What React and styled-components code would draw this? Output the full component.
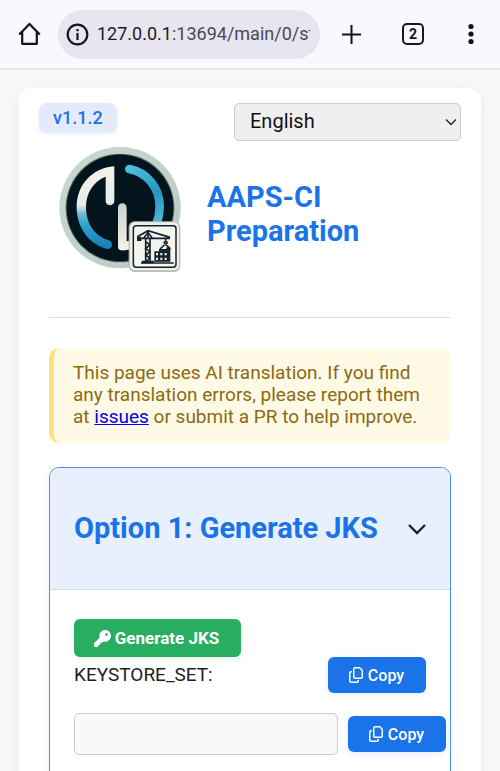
import React from "react";
import styled, { createGlobalStyle } from "styled-components";
import { FaKey, FaRegCopy } from "react-icons/fa6";

const GlobalStyle = createGlobalStyle`
  * { box-sizing: border-box; }
  body {
    margin: 0;
    background: #f8f8f8;
    color: #222;
    font-family: Roboto, "Liberation Sans", sans-serif;
  }
  h1, h2, p { margin: 0; }
  button, input, select { font-family: inherit; }
  svg { display: block; flex-shrink: 0; }
`;

const Screen = styled.div`
  height: 100vh;
  display: flex;
  flex-direction: column;
`;

const BrowserBar = styled.header`
  display: flex;
  align-items: center;
  flex-shrink: 0;
  height: 70px;
  padding: 0 17px 0 18px;
  background: #f9f8ff;
  border-bottom: 2px solid #e6e5eb;
`;

const IconButton = styled.button`
  display: flex;
  align-items: center;
  justify-content: center;
  width: 24px;
  height: 24px;
  padding: 0;
  border: 0;
  background: none;
  color: #121318;
  margin-left: ${(p) => p.$gap || 0}px;
`;

const Address = styled.div`
  display: flex;
  align-items: center;
  gap: 8px;
  flex: 1;
  min-width: 0;
  height: 49px;
  margin-left: 16px;
  padding: 0 10px 0 8px;
  border-radius: 25px;
  background: #e7e5ef;
`;

const Url = styled.span`
  flex: 1;
  overflow: hidden;
  white-space: nowrap;
  font-size: 18px;
  line-height: 26px;
  color: #4a4953;
`;

const Host = styled.span`
  color: #1c1b21;
`;

const Viewport = styled.main`
  flex: 1;
  min-height: 0;
  overflow-y: auto;
  scrollbar-width: none;
  padding: 18px 19px;
`;

const Sheet = styled.div`
  padding: 15px 20px 30px;
  border-radius: 12px;
  background: #fff;
  box-shadow: 0 4px 16px rgba(0, 0, 0, 0.06);
`;

const TopRow = styled.div`
  display: flex;
  align-items: flex-start;
  justify-content: space-between;
`;

const Version = styled.span`
  padding: 0 14px;
  border-radius: 8px;
  background: #e4eafc;
  box-shadow: 0 1px 4px rgba(26, 115, 232, 0.1);
  color: #1a73e8;
  font-size: 18px;
  font-weight: 500;
  line-height: 30px;
`;

const LanguagePicker = styled.div`
  display: grid;
  align-items: center;
  width: 227px;

  > * { grid-area: 1 / 1; }
  > svg { justify-self: end; margin-right: 4px; pointer-events: none; }
`;

const Language = styled.select`
  appearance: none;
  width: 100%;
  height: 38px;
  padding: 0 24px 2px 15px;
  border: 1px solid #ccc;
  border-radius: 5px;
  background-color: #efefef;
  color: #111;
  font-size: 20px;
`;

const Content = styled.div`
  padding: 0 10px;
`;

const Brand = styled.div`
  display: flex;
  align-items: flex-start;
  gap: 26px;
  padding: 6px 10px 45px;
  border-bottom: 1px solid #ddd;
`;

const Title = styled.h1`
  margin-top: 33px;
  color: #1a73e8;
  font-size: 29px;
  font-weight: 700;
  line-height: 34px;
`;

const Notice = styled.p`
  margin-top: 30px;
  padding: 14px 20px 15px 19px;
  border-left: 5px solid #ffe082;
  border-radius: 10px;
  background: #fffae6;
  color: #8a6a10;
  font-size: 19px;
  line-height: 22px;
`;

const IssueLink = styled.a`
  color: #0000ee;
`;

const Panel = styled.section`
  margin-top: 24px;
  border: 1px solid #4a8fee;
  border-radius: 10px;
  overflow: hidden;
  box-shadow: 0 2px 10px rgba(0, 0, 0, 0.05);
`;

const PanelHeader = styled.div`
  display: flex;
  align-items: center;
  justify-content: space-between;
  height: 122px;
  padding: 0 21px 2px 24px;
  border-bottom: 1px solid #d5dbe6;
  background: #e8f0fe;
`;

const PanelTitle = styled.h2`
  color: #1a73e8;
  font-size: 29px;
  font-weight: 700;
  line-height: 34px;
`;

const PanelBody = styled.div`
  padding: 29px 24px 40px;
`;

const ActionButton = styled.button`
  display: inline-flex;
  align-items: center;
  justify-content: center;
  gap: 4px;
  flex-shrink: 0;
  width: ${(p) => (p.$primary ? 98 : 167)}px;
  height: ${(p) => (p.$primary ? 36 : 38)}px;
  padding: 0 2px 0 0;
  border: 0;
  border-radius: 6px;
  background: ${(p) => (p.$primary ? "#1a73e8" : "#27ae60")};
  box-shadow: 0 2px 6px ${(p) => (p.$primary ? "rgba(26, 115, 232, 0.12)" : "rgba(39, 174, 96, 0.14)")};
  color: #fff;
  font-size: ${(p) => (p.$primary ? 16 : 17)}px;
  font-weight: ${(p) => (p.$primary ? 500 : 700)};
`;

const LabelRow = styled.div`
  display: flex;
  align-items: center;
  justify-content: space-between;
`;

const FieldLabel = styled.label`
  font-size: 19px;
  line-height: 24px;
`;

const FieldRow = styled.div`
  display: flex;
  align-items: center;
  gap: 10px;
  margin: 20px -20px 0 0;
`;

const Field = styled.input`
  flex: 1;
  min-width: 0;
  height: 42px;
  padding: 0 10px;
  border: 1px solid #ccc;
  border-radius: 5px;
  background: #f8f9fb;
  font-size: 17px;
`;

const HomeIcon = () => (
  <svg width="24" height="24" viewBox="0 0 24 24" fill="none" stroke="currentColor" strokeWidth="2.2" strokeLinejoin="round">
    <path d="M1.2 12.4 11.5 1.9 21.8 12.4M4.2 9.8v12h14.6v-12" />
  </svg>
);

const InfoIcon = () => (
  <svg width="23" height="23" viewBox="0 0 23 23" fill="none" stroke="#17171d" strokeWidth="2.2">
    <circle cx="11.5" cy="11.5" r="9.8" />
    <path d="M11.5 10v7M11.5 6v2.3" />
  </svg>
);

const PlusIcon = () => (
  <svg width="22" height="22" viewBox="0 0 22 22" stroke="currentColor" strokeWidth="2">
    <path d="M11.5 2v19M2 11.5h19" />
  </svg>
);

const TabCount = styled.span`
  display: flex;
  align-items: center;
  justify-content: center;
  width: 22px;
  height: 22px;
  border: 2px solid #17171d;
  border-radius: 5px;
  font-size: 14px;
  font-weight: 700;
`;

const MoreIcon = () => (
  <svg width="6" height="22" viewBox="0 0 6 22" fill="currentColor">
    <circle cx="3" cy="3.5" r="2.6" />
    <circle cx="3" cy="11" r="2.6" />
    <circle cx="3" cy="18.5" r="2.6" />
  </svg>
);

const SelectArrow = () => (
  <svg width="12" height="8" viewBox="0 0 12 8" fill="none" stroke="#222" strokeWidth="1.3">
    <path d="m1 1.5 5 5 5-5" />
  </svg>
);

const Chevron = () => (
  <svg width="24" height="24" viewBox="0 0 24 24" fill="none" stroke="#222" strokeWidth="2.4">
    <path d="m4 9 8 8 8-8" />
  </svg>
);

const Logo = () => (
  <svg width="122" height="125" viewBox="28 18 366 375" role="img" aria-label="AAPS-CI logo">
    <defs>
      <linearGradient id="rim" x1="0" y1="0" x2="1" y2="1">
        <stop offset="0" stopColor="#cbd8cf" />
        <stop offset="1" stopColor="#b9cbc4" />
      </linearGradient>
      <linearGradient id="leftArc" gradientUnits="userSpaceOnUse" x1="130" y1="80" x2="150" y2="315">
        <stop offset="0" stopColor="#f4f2e9" />
        <stop offset="0.46" stopColor="#e6ece8" />
        <stop offset="0.58" stopColor="#6bbbd0" />
        <stop offset="0.72" stopColor="#2ba2c9" />
        <stop offset="1" stopColor="#1a80b8" />
      </linearGradient>
      <linearGradient id="rightArc" gradientUnits="userSpaceOnUse" x1="235" y1="80" x2="325" y2="250">
        <stop offset="0" stopColor="#4cc0de" />
        <stop offset="0.55" stopColor="#2597c2" />
        <stop offset="1" stopColor="#55b8d0" />
      </linearGradient>
      <linearGradient id="lowerStem" x1="0" y1="0" x2="0" y2="1">
        <stop offset="0" stopColor="#cbd0cb" />
        <stop offset="1" stopColor="#f3f3ea" />
      </linearGradient>
    </defs>
    <circle cx="211" cy="200" r="182" fill="url(#rim)" />
    <circle cx="211" cy="201" r="163" fill="#53615f" />
    <circle cx="211" cy="201" r="160" fill="#03141d" />
    <path
      d="M194 76V180a13 13 0 0 1-26 0V107C131 120 109 157 109 198c0 50 27 88 67 99 18 6 14 31-7 26C115 308 81 257 81 199 81 133 126 81 194 76Z"
      fill="url(#leftArc)"
    />
    <path d="M239 84c54 10 91 58 91 112 0 20-4 38-10 54" fill="none" stroke="url(#rightArc)" strokeWidth="26" strokeLinecap="round" />
    <path d="M205 200a13 13 0 0 1 26 0v101l14-3v26q-17 5-30 4-10-1-10-11Z" fill="url(#lowerStem)" />
    <rect x="237" y="241" width="155" height="152" rx="18" fill="#b7bdb8" />
    <rect x="241" y="244" width="147" height="144" rx="15" fill="#edf0e9" />
    <rect x="251" y="254" width="128" height="125" rx="9" fill="#f4f5ee" stroke="#17232a" strokeWidth="4.5" />
    <g fill="none" stroke="#14232d" strokeWidth="5">
      <path d="M263 292h98M263 287l32-18 66 20M295 268v24" />
      <path d="M288 292v73M301 292v73M288 302l13 10-13 10 13 10-13 10 13 10-13 10" />
      <path d="M282 292l13-18 13 18M348 292v11M348 310c-6-3-6-8 0-8s6 5 0 8M346 310l-15 14M349 310l13 14" />
      <path d="M274 366h98" strokeWidth="5" />
    </g>
    <path d="M262 287h13v13h-13zM276 359h37v8h-37zM314 331h14v-7h22v-5h12v43h-48z" fill="#14232d" />
    <path d="M319 336h6v7h-6zM332 336h6v7h-6zM345 336h6v7h-6zM319 350h6v7h-6zM332 350h6v7h-6zM345 350h6v7h-6z" fill="#f4f5ee" />
  </svg>
);

export default function App() {
  return (
    <Screen>
      <GlobalStyle />
      <BrowserBar>
        <IconButton aria-label="Home"><HomeIcon /></IconButton>
        <Address>
          <InfoIcon />
          <Url><Host>127.0.0.1</Host>:13694/main/0/st</Url>
        </Address>
        <IconButton $gap={19} aria-label="New tab"><PlusIcon /></IconButton>
        <IconButton $gap={38} aria-label="Tabs"><TabCount>2</TabCount></IconButton>
        <IconButton $gap={34} aria-label="More"><MoreIcon /></IconButton>
      </BrowserBar>
      <Viewport>
        <Sheet>
          <TopRow>
            <Version>v1.1.2</Version>
            <LanguagePicker>
              <Language aria-label="Language" defaultValue="en">
                <option value="en">English</option>
              </Language>
              <SelectArrow />
            </LanguagePicker>
          </TopRow>
          <Content>
            <Brand>
              <Logo />
              <Title>AAPS-CI Preparation</Title>
            </Brand>
            <Notice>
              This page uses AI translation. If you find any translation errors, please report them at{" "}
              <IssueLink href="#issues">issues</IssueLink> or submit a PR to help improve.
            </Notice>
            <Panel>
              <PanelHeader>
                <PanelTitle>Option 1: Generate JKS</PanelTitle>
                <IconButton aria-label="Toggle section"><Chevron /></IconButton>
              </PanelHeader>
              <PanelBody>
                <ActionButton><FaKey size={17} />Generate JKS</ActionButton>
                <LabelRow>
                  <FieldLabel htmlFor="keystore">KEYSTORE_SET:</FieldLabel>
                  <ActionButton $primary><FaRegCopy size={16} />Copy</ActionButton>
                </LabelRow>
                <FieldRow>
                  <Field id="keystore" readOnly />
                  <ActionButton $primary><FaRegCopy size={16} />Copy</ActionButton>
                </FieldRow>
              </PanelBody>
            </Panel>
          </Content>
        </Sheet>
      </Viewport>
    </Screen>
  );
}
